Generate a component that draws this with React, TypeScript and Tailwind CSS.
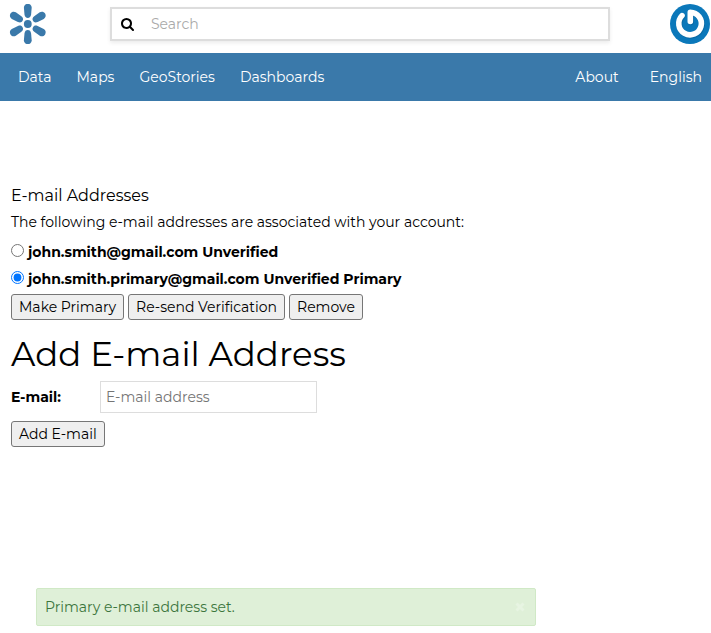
import type { ReactNode } from 'react';

const navLinks = ['Data', 'Maps', 'GeoStories', 'Dashboards'];

const addresses = [
  { email: 'john.smith@gmail.com', status: 'Unverified', primary: false },
  { email: 'john.smith.primary@gmail.com', status: 'Unverified Primary', primary: true },
];

function Logo() {
  return (
    <svg viewBox="0 0 38 40" className="h-10 w-[38px]" fill="#3a79aa" aria-hidden="true">
      <circle cx="18.800" cy="20" r="3.900" />
      {[0, 59, 121, 180, 239, 301].map((angle) => (
        <path
          key={angle}
          transform={`rotate(${angle} 18.800 20)`}
          d="M18.800 -0.200C16.500 -0.200 14.900 1.500 14.900 3.700L15.500 10.500C15.800 12.800 17 13.900 18.800 13.900S21.800 12.800 22.100 10.500L22.700 3.700C22.700 1.500 21.100 -0.200 18.800 -0.200Z"
        />
      ))}
    </svg>
  );
}

function Avatar() {
  return (
    <svg viewBox="0 0 40 40" className="size-10" aria-label="Account" role="img">
      <circle cx="20" cy="20" r="20" fill="#0b78ba" />
      <g fill="none" strokeLinecap="round" strokeLinejoin="round">
        <path d="M12 11.600A11.300 11.300 0 1 0 20.300 8.200V17.500" stroke="#07598e" strokeWidth="6" opacity="0.500" transform="translate(0.600 0.800)" />
        <path d="M12 11.600A11.300 11.300 0 1 0 20.300 8.200V17.500" stroke="#fff" strokeWidth="5.600" />
      </g>
    </svg>
  );
}

function Button({ children }: { children: ReactNode }) {
  return (
    <button
      type="button"
      className="h-[26px] rounded-[3px] border border-[#767676] bg-[#efefef] px-[7px] text-sm leading-5 whitespace-nowrap"
    >
      {children}
    </button>
  );
}

export default function App() {
  return (
    <div className="flex min-h-screen flex-col bg-white font-['Montserrat','Inter',sans-serif] text-sm leading-5 text-black">
      <header className="flex h-[53px] items-start justify-between pt-1 pr-px pl-[9px]">
        <a href="#home" aria-label="Home">
          <Logo />
        </a>
        <form className="mt-[3px] ml-[63px] flex h-[34px] max-w-[500px] flex-1 items-center border-2 border-[#dddddd] shadow-[0_2px_4px_rgba(0,0,0,0.08)]">
          <svg viewBox="0 0 1664 1664" className="ml-[9px] size-[13px]" aria-hidden="true">
            <path d="M1152 704q0-185-131.500-316.500T704 256 387.500 387.500 256 704t131.500 316.500T704 1152t316.500-131.500T1152 704zm512 832q0 52-38 90t-90 38q-54 0-90-38l-343-342q-179 124-399 124-143 0-273.500-55.500t-225-150-150-225T0 704t55.500-273.500 150-225 225-150T704 0t273.500 55.500 225 150 150 225T1408 704q0 220-124 399l343 343q37 37 37 90z" />
          </svg>
          <input
            type="search"
            aria-label="Search"
            placeholder="Search"
            className="ml-[17px] min-w-0 flex-1 outline-none placeholder:text-[#aaaaaa]"
          />
        </form>
        <a href="#account" className="ml-[60px]">
          <Avatar />
        </a>
      </header>

      <nav className="flex h-12 items-center justify-between bg-[#3a79aa] pr-[9px] pl-[18px] text-white">
        <div className="flex gap-[25px]">
          {navLinks.map((label) => (
            <a key={label} href={`#${label.toLowerCase()}`}>
              {label}
            </a>
          ))}
        </div>
        <div className="flex gap-[31px]">
          <a href="#about">About</a>
          <a href="#language">English</a>
        </div>
      </nav>

      <main className="px-[11px] pt-[85px] pb-8">
        <h3 className="text-base leading-5">E-mail Addresses</h3>
        <p className="mt-[6px]">The following e-mail addresses are associated with your account:</p>
        <form className="mt-[10px]">
          <div className="flex flex-col items-start gap-[7px] font-bold">
            {addresses.map(({ email, status, primary }) => (
              <label key={email} className="flex items-start gap-1">
                <input type="radio" name="email" defaultChecked={primary} className="mt-[2px] size-[13px]" />
                <span>
                  {email} {status}
                </span>
              </label>
            ))}
          </div>
          <div className="mt-[5px] flex gap-1">
            <Button>Make Primary</Button>
            <Button>Re-send Verification</Button>
            <Button>Remove</Button>
          </div>
        </form>

        <h1 className="mt-[14px] text-[34px] leading-10">Add E-mail Address</h1>
        <form className="mt-[7px]">
          <div className="mb-2 flex items-center">
            <label htmlFor="new-email" className="w-[89px] font-bold">
              E-mail:
            </label>
            <input
              id="new-email"
              type="email"
              placeholder="E-mail address"
              className="h-8 w-[217px] border border-[#dddddd] px-[5px] outline-none placeholder:text-[#757575]"
            />
          </div>
          <Button>Add E-mail</Button>
        </form>
      </main>

      <div
        role="status"
        className="mt-auto mb-[7px] ml-9 flex h-[38px] w-[500px] max-w-full items-center justify-between rounded-[2px] border border-[#d0e9c6] bg-[#dff0d8] pr-[10px] pl-2 text-[#3c763d]"
      >
        <span>Primary e-mail address set.</span>
        <button type="button" aria-label="Close">
          <svg viewBox="0 0 10 10" className="size-[10px]" aria-hidden="true">
            <path d="M1.500 1.500L8.500 8.500M8.500 1.500L1.500 8.500" stroke="#e7f4e2" strokeWidth="3" />
          </svg>
        </button>
      </div>
    </div>
  );
}
